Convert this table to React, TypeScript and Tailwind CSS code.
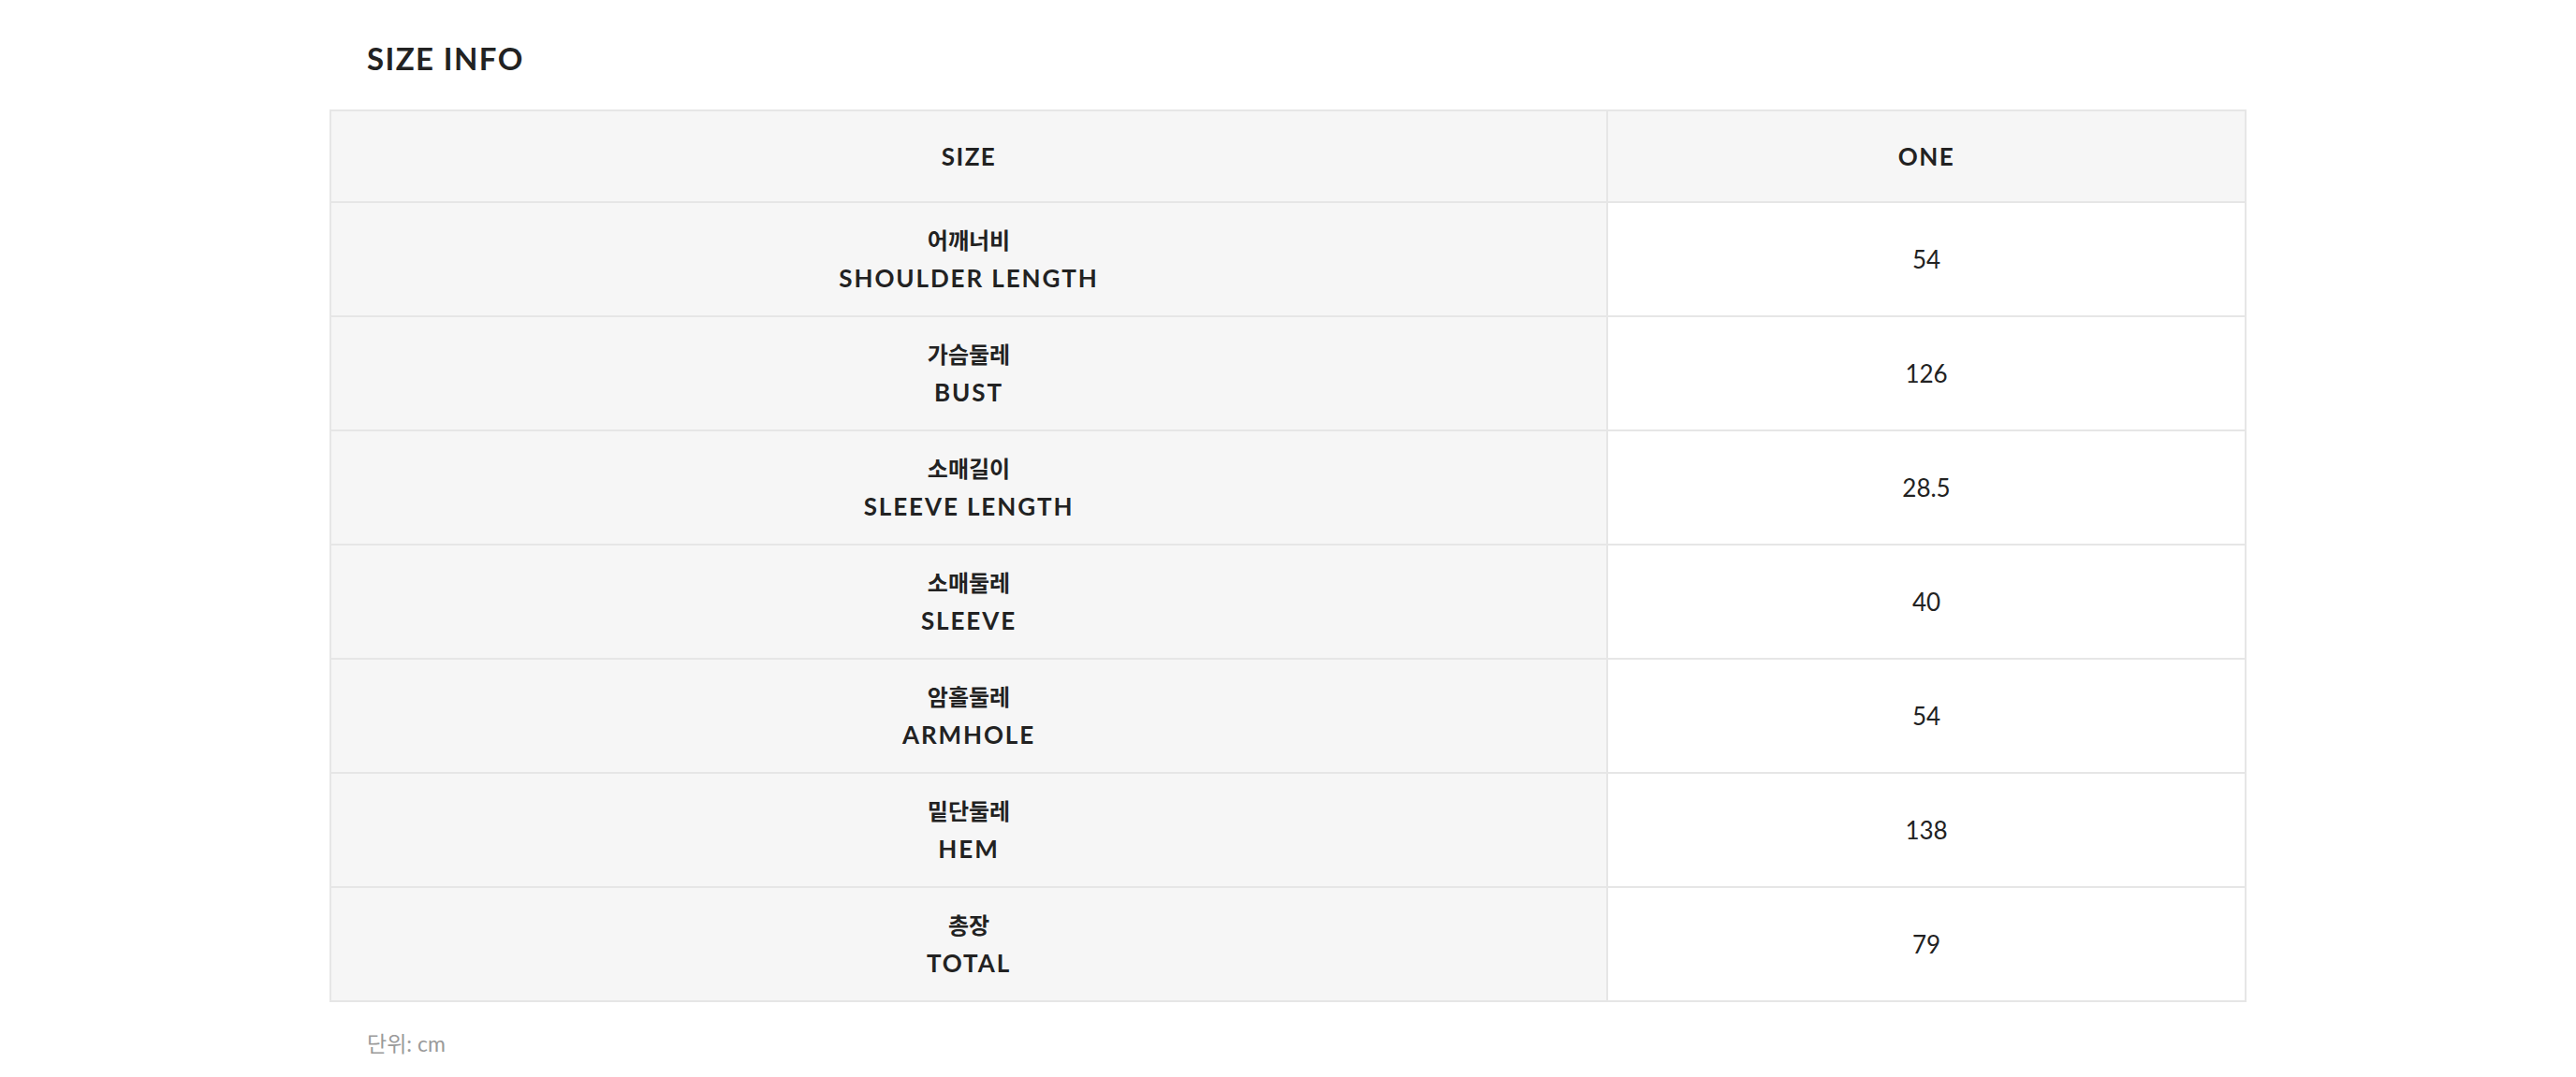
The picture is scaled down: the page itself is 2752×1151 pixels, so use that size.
const rows = [
  { ko: '어깨너비', en: 'SHOULDER LENGTH', value: '54' },
  { ko: '가슴둘레', en: 'BUST', value: '126' },
  { ko: '소매길이', en: 'SLEEVE LENGTH', value: '28.5' },
  { ko: '소매둘레', en: 'SLEEVE', value: '40' },
  { ko: '암홀둘레', en: 'ARMHOLE', value: '54' },
  { ko: '밑단둘레', en: 'HEM', value: '138' },
  { ko: '총장', en: 'TOTAL', value: '79' },
]

export default function App() {
  return (
    <div className="min-h-[1151px] w-full bg-white font-['Lato','Noto_Sans_CJK_KR',sans-serif] text-[#222]">
      <div className="mx-auto w-[2048px]">
        {/* Title */}
        <h2 className="pl-[40px] pt-[46px] text-[33px] font-bold leading-[32px] tracking-[1.4px]">SIZE INFO</h2>

        {/* Size table */}
        <table className="mt-[39px] w-full border-collapse text-center">
          <thead>
            <tr className="h-[98px] bg-[#f6f6f6]">
              <th className="w-2/3 border-2 border-[#e6e6e6] text-[26px] font-bold tracking-[1.5px]">SIZE</th>
              <th className="border-2 border-[#e6e6e6] text-[26px] font-bold tracking-[1.5px]">ONE</th>
            </tr>
          </thead>
          <tbody>
            {rows.map((row) => (
              <tr key={row.en} className="h-[122px]">
                <td className="border-2 border-[#e6e6e6] bg-[#f6f6f6]">
                  <div className="text-[24px] font-semibold leading-[40px]">{row.ko}</div>
                  <div className="text-[26px] font-bold leading-[40px] tracking-[1.9px]">{row.en}</div>
                </td>
                <td className="border-2 border-[#e6e6e6] text-[26px]">{row.value}</td>
              </tr>
            ))}
          </tbody>
        </table>

        {/* Unit note */}
        <p className="mt-[29px] pl-[40px] text-[23px] font-normal leading-[30px] text-[#9a9a9a]">단위: cm</p>
      </div>
    </div>
  )
}
